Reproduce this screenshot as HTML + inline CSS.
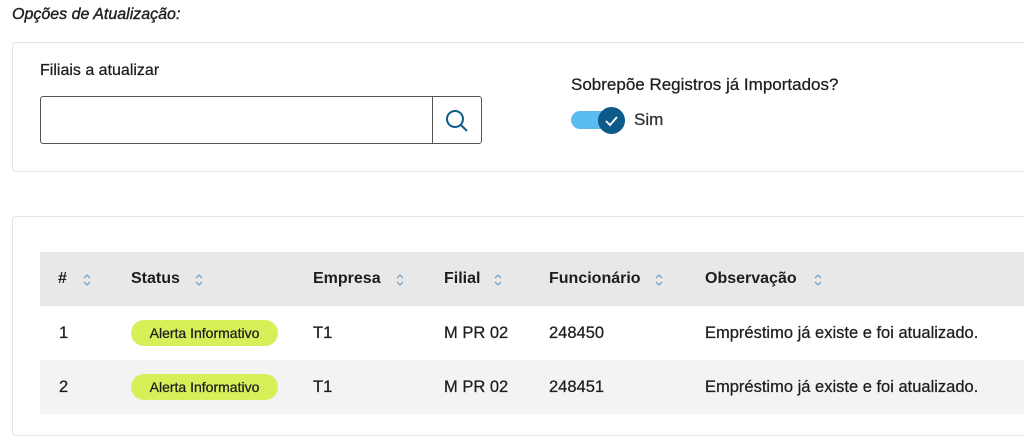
<!DOCTYPE html>
<html><head><style>
*{margin:0;padding:0;box-sizing:border-box}
body{width:1024px;height:416px;background:#fff;font-family:"Liberation Sans",sans-serif;color:#1d1d1d;position:relative;overflow:hidden;-webkit-text-stroke:0.25px #1d1d1d}
.t{position:absolute;white-space:nowrap}
.card{position:absolute;left:12px;width:1030px;border:1px solid #e4e4e4;border-radius:4px;background:#fff}
.bg{position:absolute;left:40px;width:990px}
.c{position:absolute;font-size:16.5px;white-space:nowrap}
.h{font-weight:bold;top:270px;font-size:16px;-webkit-text-stroke:0}
.sort{position:absolute;top:272px}
.badge{position:absolute;left:131px;width:147px;height:26px;border-radius:13px;background:#d6f05a;font-size:14px;text-align:center;line-height:26px;color:#1d1d1d}
</style></head><body>
<div class="t" style="left:12px;top:6px;font-size:16px;font-style:italic;color:#222;-webkit-text-stroke:0.4px #222">Opções de Atualização:</div>
<div class="card" style="top:42px;height:130px"></div>
<div class="t" style="left:40px;top:62px;font-size:16px">Filiais a atualizar</div>
<div style="position:absolute;left:40px;top:96px;width:442px;height:48px;border:1px solid #555;border-radius:3px"></div>
<div style="position:absolute;left:432px;top:96px;width:1px;height:48px;background:#555"></div>
<svg style="position:absolute;left:444px;top:108px" width="26" height="26" viewBox="0 0 26 26"><circle cx="11" cy="11" r="8" fill="none" stroke="#0c5a8a" stroke-width="2"/><path d="M17 17l6 6" stroke="#0c5a8a" stroke-width="2"/></svg>
<div class="t" style="left:571px;top:75px;font-size:17px">Sobrepõe Registros já Importados?</div>
<div style="position:absolute;left:571px;top:111px;width:40px;height:18px;border-radius:9px;background:#5bbcf0"></div>
<div style="position:absolute;left:598px;top:107px;width:27px;height:27px;border-radius:50%;background:#0c5a8a"></div>
<svg style="position:absolute;left:598px;top:107px" width="27" height="27"><path d="M8 14l4 4 7-8" fill="none" stroke="#fff" stroke-width="1.8"/></svg>
<div class="t" style="left:634px;top:110px;font-size:17px;color:#333">Sim</div>

<div class="card" style="top:216px;height:220px"></div>
<div class="bg" style="top:252px;height:54px;background:#e8e8e8"></div>
<div class="bg" style="top:306px;height:54px;background:#fff"></div>
<div class="bg" style="top:360px;height:54px;background:#f3f3f3"></div>

<div class="c h" style="left:58px">#</div>
<div class="c h" style="left:131px">Status</div>
<div class="c h" style="left:313px">Empresa</div>
<div class="c h" style="left:444px">Filial</div>
<div class="c h" style="left:549px">Funcionário</div>
<div class="c h" style="left:705px">Observação</div>
<svg class="sort" style="left:82px" width="10" height="16"><path d="M2 6l3-3 3 3M2 10l3 3 3-3" fill="none" stroke="#7aa3c4" stroke-width="1.3"/></svg>
<svg class="sort" style="left:194px" width="10" height="16"><path d="M2 6l3-3 3 3M2 10l3 3 3-3" fill="none" stroke="#7aa3c4" stroke-width="1.3"/></svg>
<svg class="sort" style="left:395px" width="10" height="16"><path d="M2 6l3-3 3 3M2 10l3 3 3-3" fill="none" stroke="#7aa3c4" stroke-width="1.3"/></svg>
<svg class="sort" style="left:493px" width="10" height="16"><path d="M2 6l3-3 3 3M2 10l3 3 3-3" fill="none" stroke="#7aa3c4" stroke-width="1.3"/></svg>
<svg class="sort" style="left:654px" width="10" height="16"><path d="M2 6l3-3 3 3M2 10l3 3 3-3" fill="none" stroke="#7aa3c4" stroke-width="1.3"/></svg>
<svg class="sort" style="left:813px" width="10" height="16"><path d="M2 6l3-3 3 3M2 10l3 3 3-3" fill="none" stroke="#7aa3c4" stroke-width="1.3"/></svg>

<div class="badge" style="top:320px">Alerta Informativo</div>
<div class="badge" style="top:374px">Alerta Informativo</div>
<div class="c" style="left:59px;top:324px">1</div>
<div class="c" style="left:313px;top:324px">T1</div>
<div class="c" style="left:444px;top:324px">M PR 02</div>
<div class="c" style="left:549px;top:324px">248450</div>
<div class="c" style="left:705px;top:324px">Empréstimo já existe e foi atualizado.</div>
<div class="c" style="left:59px;top:378px">2</div>
<div class="c" style="left:313px;top:378px">T1</div>
<div class="c" style="left:444px;top:378px">M PR 02</div>
<div class="c" style="left:549px;top:378px">248451</div>
<div class="c" style="left:705px;top:378px">Empréstimo já existe e foi atualizado.</div>
</body></html>
